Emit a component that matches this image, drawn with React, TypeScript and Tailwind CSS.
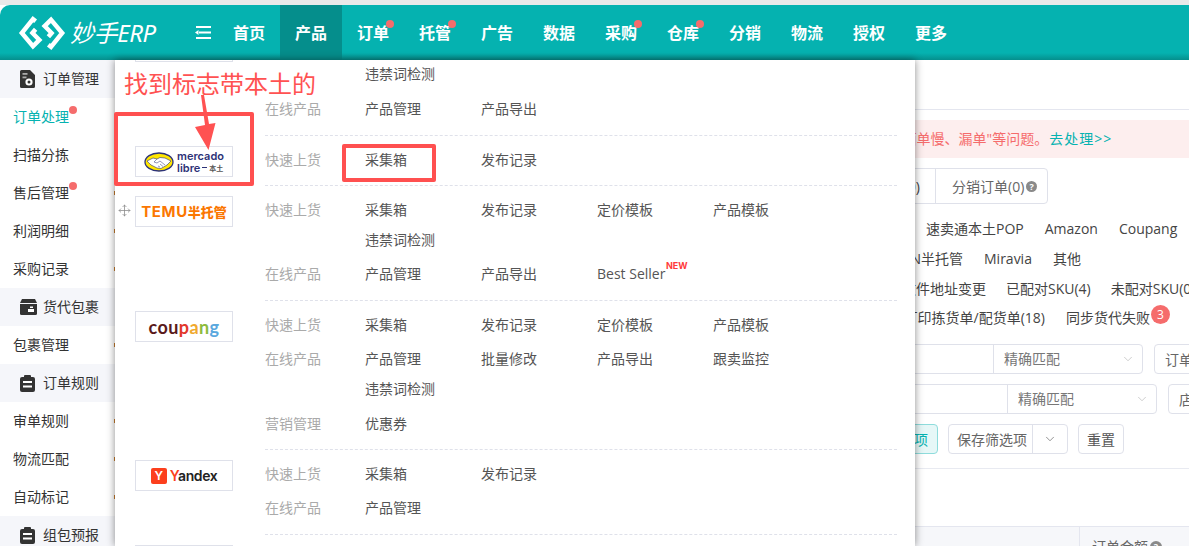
import React from "react";
import { Move, ChevronDown } from "lucide-react";

const nav = [
  ["首页", 0], ["产品", 0], ["订单", 1], ["托管", 1], ["广告", 0], ["数据", 0], ["采购", 1], ["仓库", 1], ["分销", 0], ["物流", 0], ["授权", 0], ["更多", 0],
] as const;

function Logo() {
  const d = "M18.500 5.500 L16 3.500 L5.500 16.500 L16 29 L22 23 L15.500 16.500 L18.500 13";
  return (
    <svg width="48" height="34" viewBox="2.200 0.500 44.600 32" className="shrink-0" fill="none" stroke="#fff" strokeWidth="4.2" strokeLinejoin="miter">
      <path d={d} />
      <path d={d} transform="rotate(180 24.500 16.500)" />
    </svg>
  );
}

function DocGear() {
  return (
    <svg width="15" height="18" viewBox="0 0 15 18">
      <path d="M1.5 0H10l5 5v11.5a1.5 1.5 0 0 1-1.5 1.5h-12A1.5 1.5 0 0 1 0 16.500V1.500A1.500 1.500 0 0 1 1.500 0z" fill="#333" />
      <rect x="2.500" y="3" width="5" height="1.800" fill="#aaa" />
      <rect x="2.500" y="6.500" width="4" height="1.800" fill="#aaa" />
      <circle cx="9" cy="12" r="3.600" fill="#fff" />
      <circle cx="9" cy="12" r="1.500" fill="#333" />
    </svg>
  );
}

function BoxIcon() {
  return (
    <svg width="17" height="16" viewBox="0 0 17 16">
      <path d="M2 0h13l2 4H0z" fill="#333" />
      <path d="M0 5h17v9.500a1.500 1.500 0 0 1-1.500 1.500h-14A1.500 1.500 0 0 1 0 14.500z" fill="#333" />
      <rect x="8" y="10" width="6" height="3" fill="#fff" />
      <rect x="10" y="7.500" width="3" height="1.500" fill="#fff" />
    </svg>
  );
}

function Clip() {
  return (
    <svg width="15" height="17" viewBox="0 0 15 17">
      <rect x="0" y="2" width="15" height="15" rx="2" fill="#333" />
      <rect x="4" y="0" width="7" height="3.500" rx="1" fill="#333" />
      <rect x="3" y="6" width="9" height="2" fill="#fff" />
      <rect x="3" y="10.500" width="9" height="2" fill="#fff" />
    </svg>
  );
}

function SideHead({ icon, text }: { icon: React.ReactNode; text: string }) {
  return (
    <div className="h-[38px] bg-[#f5f6fa] flex items-center pl-5 text-[14px] text-[#333]">
      <span className="w-[23px] flex items-center">{icon}</span>
      <span className="-mt-[2px]">{text}</span>
    </div>
  );
}

function SideItem({ text, active, dot, mark }: { text: string; active?: boolean; dot?: boolean; mark?: boolean }) {
  return (
    <div className={`relative h-[38px] flex items-center pl-[13px] text-[14px] ${active ? "text-[#05b2b0]" : "text-[#333]"}`}>
      <span className="relative -mt-[2px]">
        {text}
        {dot && <span className="absolute -right-2 top-0 w-2 h-2 rounded-full bg-[#f56c6c]" />}
      </span>
      {mark && <span className="absolute right-0 top-[17px] w-px h-[4px] bg-[#c47a2c]" />}
    </div>
  );
}

function Mercado() {
  return (
    <div className="flex items-center gap-[3px] text-[#2d3277]">
      <svg width="30" height="20" viewBox="0 0 30 20">
        <ellipse cx="15" cy="10" rx="14" ry="9" fill="#ffe600" stroke="#2d3277" strokeWidth="1.300" />
        <path d="M3 9 L9 6 L13 7 L16 5.500 L21 6 L27 9 L23 13 L17 16.500 L13 16 L7 13 Z" fill="#fff" stroke="#2d3277" strokeWidth="0.600" />
        <path d="M13 7 L10 10 L13 11 L16 9 L21 13 M14 14 L16 15 M16 12 L19 14.500" fill="none" stroke="#2d3277" strokeWidth="0.500" />
      </svg>
      <div className="font-['Inter',sans-serif] font-semibold text-[11px] leading-[12px]">
        <div>mercado</div>
        <div className="flex items-center">
          libre
          <span className="w-[5px] h-px bg-[#2d3277] mx-[2px]" />
          <span className="text-[7px] text-[#555] font-['Noto_Sans_CJK_SC',sans-serif]">本土</span>
        </div>
      </div>
    </div>
  );
}

function Temu() {
  return (
    <span className="text-[#fb7701] font-bold text-[15px] leading-none tracking-[0.6px] font-['Inter','Noto_Sans_CJK_SC',sans-serif]">
      TEMU<span className="text-[13px] tracking-normal font-black">半托管</span>
    </span>
  );
}

function Coupang() {
  return (
    <span className="font-['Lato',sans-serif] font-bold text-[18px] leading-none tracking-[0.4px]">
      <span className="text-[#5a1a1a]">cou</span>
      <span className="text-[#e2382c]">p</span>
      <span className="text-[#f0a92e]">a</span>
      <span className="text-[#8dbb3c]">n</span>
      <span className="text-[#5aa8de]">g</span>
    </span>
  );
}

function Yandex() {
  return (
    <span className="flex items-center gap-[3px]">
      <span className="w-4 h-4 rounded-[2px] bg-[#fc3f1d] text-white flex items-center justify-center text-[12px] font-semibold font-['Inter',sans-serif]">Y</span>
      <span className="font-['Inter',sans-serif] font-semibold text-[14px] text-[#222] leading-none tracking-[-0.4px]">
        <span className="text-[#fc3f1d]">Y</span>andex
      </span>
    </span>
  );
}

type Sec = { label: string; lines: (string | [string, boolean])[][] };

function MenuGroup({ logo, secs, top, height, drag }: { logo?: React.ReactNode; secs: Sec[]; top: string; height: string; drag?: boolean }) {
  return (
    <div className={`flex ${height}`}>
      <div className="w-[150px] shrink-0 pl-5 pt-[10px] relative">
        {drag && <Move size={13} strokeWidth={1.4} className="absolute left-[3px] top-[18px] text-[#888]" />}
        {logo && <div className="w-[98px] h-[31px] border border-[#dfe1ea] flex items-center justify-center bg-white">{logo}</div>}
      </div>
      <div className={`w-[632px] ${top} flex flex-col gap-[4.5px] border-b border-dashed border-[#dfe1ea]`}>
        {secs.map((s, k) => (
          <div key={k} className="flex">
            <div className="w-[100px] shrink-0 h-[30px] pb-[2px] flex items-center text-[#aaa]">{s.label}</div>
            <div>
              {s.lines.map((ln, i) => (
                <div key={i} className="flex h-[30px] pb-[2px] items-center">
                  {ln.map((l) => {
                    const t = typeof l === "string" ? l : l[0];
                    return (
                      <div key={t} className="w-[116px] text-[#555] relative">
                        {t}
                        {typeof l !== "string" && (
                          <span className="absolute left-[69px] -top-[2px] text-[9px] leading-none font-bold text-[#ff3b3b] font-['Inter',sans-serif]">NEW</span>
                        )}
                      </div>
                    );
                  })}
                </div>
              ))}
            </div>
          </div>
        ))}
      </div>
    </div>
  );
}

function Dropdown() {
  return (
    <div className="absolute left-0 top-0 w-[800px] h-[486px] overflow-hidden bg-white shadow-[0_0_8px_rgba(0,0,0,0.45)] text-[14px]">
      <div className="absolute left-5 -top-[29px] w-[98px] h-[31px] border border-[#dfe1ea]" />
      <MenuGroup top="pt-0 [&>*:first-child]:-mt-px [&>*:last-child]:mt-px" height="h-[76px]" secs={[
        { label: "", lines: [["违禁词检测"]] },
        { label: "在线产品", lines: [["产品管理", "产品导出"]] },
      ]} />
      <MenuGroup top="pt-[9px]" height="h-[50px]" logo={<Mercado />} secs={[{ label: "快速上货", lines: [["采集箱", "发布记录"]] }]} />
      <MenuGroup top="pt-[9px]" height="h-[115px]" logo={<Temu />} drag secs={[
        { label: "快速上货", lines: [["采集箱", "发布记录", "定价模板", "产品模板"], ["违禁词检测"]] },
        { label: "在线产品", lines: [["产品管理", "产品导出", ["Best Seller", true]]] },
      ]} />
      <MenuGroup top="pt-[9px]" height="h-[149px]" logo={<Coupang />} secs={[
        { label: "快速上货", lines: [["采集箱", "发布记录", "定价模板", "产品模板"]] },
        { label: "在线产品", lines: [["产品管理", "批量修改", "产品导出", "跟卖监控"], ["违禁词检测"]] },
        { label: "营销管理", lines: [["优惠券"]] },
      ]} />
      <MenuGroup top="pt-[9px]" height="h-[85px]" logo={<Yandex />} secs={[
        { label: "快速上货", lines: [["采集箱", "发布记录"]] },
        { label: "在线产品", lines: [["产品管理"]] },
      ]} />
      <div className="ml-5 mt-[10px] w-[98px] h-[31px] border border-[#dfe1ea]" />
    </div>
  );
}

function Annotations() {
  return (
    <>
      <div className="absolute left-[124px] top-[69px] text-[24px] leading-[30px] text-[#ff5252] whitespace-nowrap">找到标志带本土的</div>
      <div className="absolute left-[114px] top-[112px] w-[140px] h-[74px] border-[4px] border-[#ff5050] rounded-[2px]" />
      <div className="absolute left-[342px] top-[144px] w-[94px] h-[38px] border-[4px] border-[#ff5050] rounded-[2px]" />
      <svg className="absolute left-[190px] top-[92px]" width="36" height="60" viewBox="0 0 36 60">
        <path d="M11 3 L14 3 L19 32 L25.500 31 L18.500 58 L5 35 L15 33 Z" fill="#ff5252" />
      </svg>
    </>
  );
}

function Help({ size = 11 }: { size?: number }) {
  return (
    <span
      className="inline-flex items-center justify-center rounded-full bg-[#8a8a8a] text-white text-[9px] font-bold leading-none shrink-0"
      style={{ width: size, height: size }}
    >
      ?
    </span>
  );
}

function FilterRow({ left, next }: { left: number; next: string }) {
  return (
    <div className="h-[30px] flex gap-[11px]">
      <div className="h-[30px] border border-[#dfe1ea] rounded-[4px] flex shrink-0 text-[14px] text-[#777]" style={{ marginLeft: left }}>
        <div className="w-[200px] border-r border-[#dfe1ea]" />
        <div className="w-[148px] flex items-center justify-between pl-[10px] pr-[7px]">
          <span className="-mt-px">精确匹配</span>
          <ChevronDown size={14} strokeWidth={1} className="text-[#aaa]" />
        </div>
      </div>
      <div className="w-[200px] h-[30px] border border-[#dfe1ea] rounded-[4px] flex items-center pl-[10px] text-[14px] text-[#666] shrink-0">{next}</div>
    </div>
  );
}

function Main() {
  return (
    <div className="relative flex-1 h-[486px] overflow-hidden text-[14px] text-[#444]">
      <div className="h-[50px] border-b border-[#e4e6ef]" />
      <div className="mt-[10px] h-[38px] bg-[#fdeeee] flex items-center pl-[614px] whitespace-nowrap text-[#f56c6c]">
        <span className="-mt-[2px]">为避免出现"发货超时、打印面单慢、漏单"等问题。</span><span className="text-[#05b2b0] ml-px -mt-[2px] tracking-[1px]">去处理&gt;&gt;</span>
      </div>
      <div className="mt-[10px] ml-[700px] w-[233px] h-[36px] border border-[#dfe1ea] rounded-[4px] flex">
        <div className="w-[120px] border-r border-[#dfe1ea] flex items-center justify-end pr-[15px]">订单(0)</div>
        <div className="flex-1 flex items-center pl-4 gap-[2px] text-[#666]">分销订单(0)<Help /></div>
      </div>
      <div className="mt-[9px] h-[30px] flex items-center gap-[21px] pl-[811px] whitespace-nowrap">
        <span>速卖通本土POP</span><span>Amazon</span><span>Coupang</span>
      </div>
      <div className="h-[30px] flex items-center gap-[21px] whitespace-nowrap">
        <span className="w-[848px] text-right shrink-0">SHEIN半托管</span><span>Miravia</span><span>其他</span>
      </div>
      <div className="h-[30px] flex items-center gap-[20px] whitespace-nowrap">
        <span className="w-[871px] text-right shrink-0">收件地址变更</span><span>已配对SKU(4)</span><span>未配对SKU(0)</span>
      </div>
      <div className="h-[29px] flex items-center gap-[21px] whitespace-nowrap">
        <span className="w-[930px] text-right shrink-0">打印拣货单/配货单(18)</span>
        <span className="relative">
          同步货代失败
          <span className="absolute -right-5 -top-[2px] w-[19px] h-[19px] rounded-full bg-[#f56c6c] text-white text-[12px] flex items-center justify-center leading-none">3</span>
        </span>
      </div>
      <div className="mt-[12px] flex flex-col gap-[10px]">
        <FilterRow left={678} next="订单号" />
        <FilterRow left={692} next="店铺" />
      </div>
      <div className="mt-[10px] h-[30px] flex gap-[10px] pl-[700px]">
        <div className="w-[123px] border border-[#8edcdc] bg-[#e6f7f7] rounded-[4px] text-[#05b2b0] flex items-center justify-end pr-[9px]">筛选项</div>
        <div className="w-[120px] border border-[#dfe1ea] rounded-[4px] flex text-[#666]">
          <div className="w-[84px] border-r border-[#dfe1ea] flex items-center pl-[8px]">保存筛选项</div>
          <div className="flex-1 flex items-center justify-center"><ChevronDown size={14} strokeWidth={1.2} /></div>
        </div>
        <div className="w-[46px] border border-[#dfe1ea] rounded-[4px] flex items-center justify-center text-[#555]">重置</div>
      </div>
      <div className="mt-[14px] h-[58px] border-t border-[#e8eaf1]" />
      <div className="h-[30px] bg-[#f6f7fa] border-t border-[#e4e6ef] flex">
        <div className="w-[965px] border-r border-[#e4e6ef]" />
        <div className="pl-3 pt-[9px] flex items-center h-[30px] gap-[2px] text-[#666]">订单金额<Help size={12} /></div>
      </div>
    </div>
  );
}

export default function App() {
  return (
    <div className="relative w-[1189px] h-[546px] overflow-hidden bg-white font-['Open_Sans','Noto_Sans_CJK_SC',sans-serif]">
      <div className="h-[5px] bg-[#e9e9e9]" />
      <header className="h-[55px] rounded-tl-[10px] bg-[linear-gradient(#05b2b0_0,#05b2b0_48px,#058f8d_55px)] flex items-center pl-[18px] text-white">
        <Logo />
        <span className="ml-[4px] w-[104px] text-[24px] italic font-normal font-['Noto_Sans','Noto_Sans_CJK_SC',sans-serif] leading-none tracking-[-0.4px]">妙手ERP</span>
        <svg width="16" height="13" viewBox="0 0 16 13" className="ml-[21px] mr-[7px]" fill="#fff">
          <rect x="1" y="0" width="15" height="2" /><rect x="4" y="5.500" width="12" height="2" /><rect x="1" y="11" width="15" height="2" /><path d="M0 6.500l3.500-2.500v5z" />
        </svg>
        <nav className="flex h-full">
          {nav.map(([t, d]) => (
            <div key={t} className={`w-[62px] h-full flex items-center justify-center text-[16px] font-bold ${t === "产品" ? "bg-[#058e8c]" : ""}`}>
              <span className="relative">
                {t}
                {d === 1 && <span className="absolute -right-[5px] -top-[1px] w-2 h-2 rounded-full bg-[#f56c6c]" />}
              </span>
            </div>
          ))}
        </nav>
      </header>
      <div className="flex h-[486px]">
        <aside className="w-[115px] shrink-0 overflow-hidden">
          <SideHead icon={<DocGear />} text="订单管理" />
          <SideItem text="订单处理" active dot />
          <SideItem text="扫描分拣" />
          <SideItem text="售后管理" dot mark />
          <SideItem text="利润明细" mark />
          <SideItem text="采购记录" mark />
          <SideHead icon={<BoxIcon />} text="货代包裹" />
          <SideItem text="包裹管理" mark />
          <SideHead icon={<Clip />} text="订单规则" />
          <SideItem text="审单规则" mark />
          <SideItem text="物流匹配" mark />
          <SideItem text="自动标记" mark />
          <SideHead icon={<Clip />} text="组包预报" />
        </aside>
        <div className="relative flex-1">
          <Main />
          <Dropdown />
        </div>
      </div>
      <Annotations />
    </div>
  );
}
